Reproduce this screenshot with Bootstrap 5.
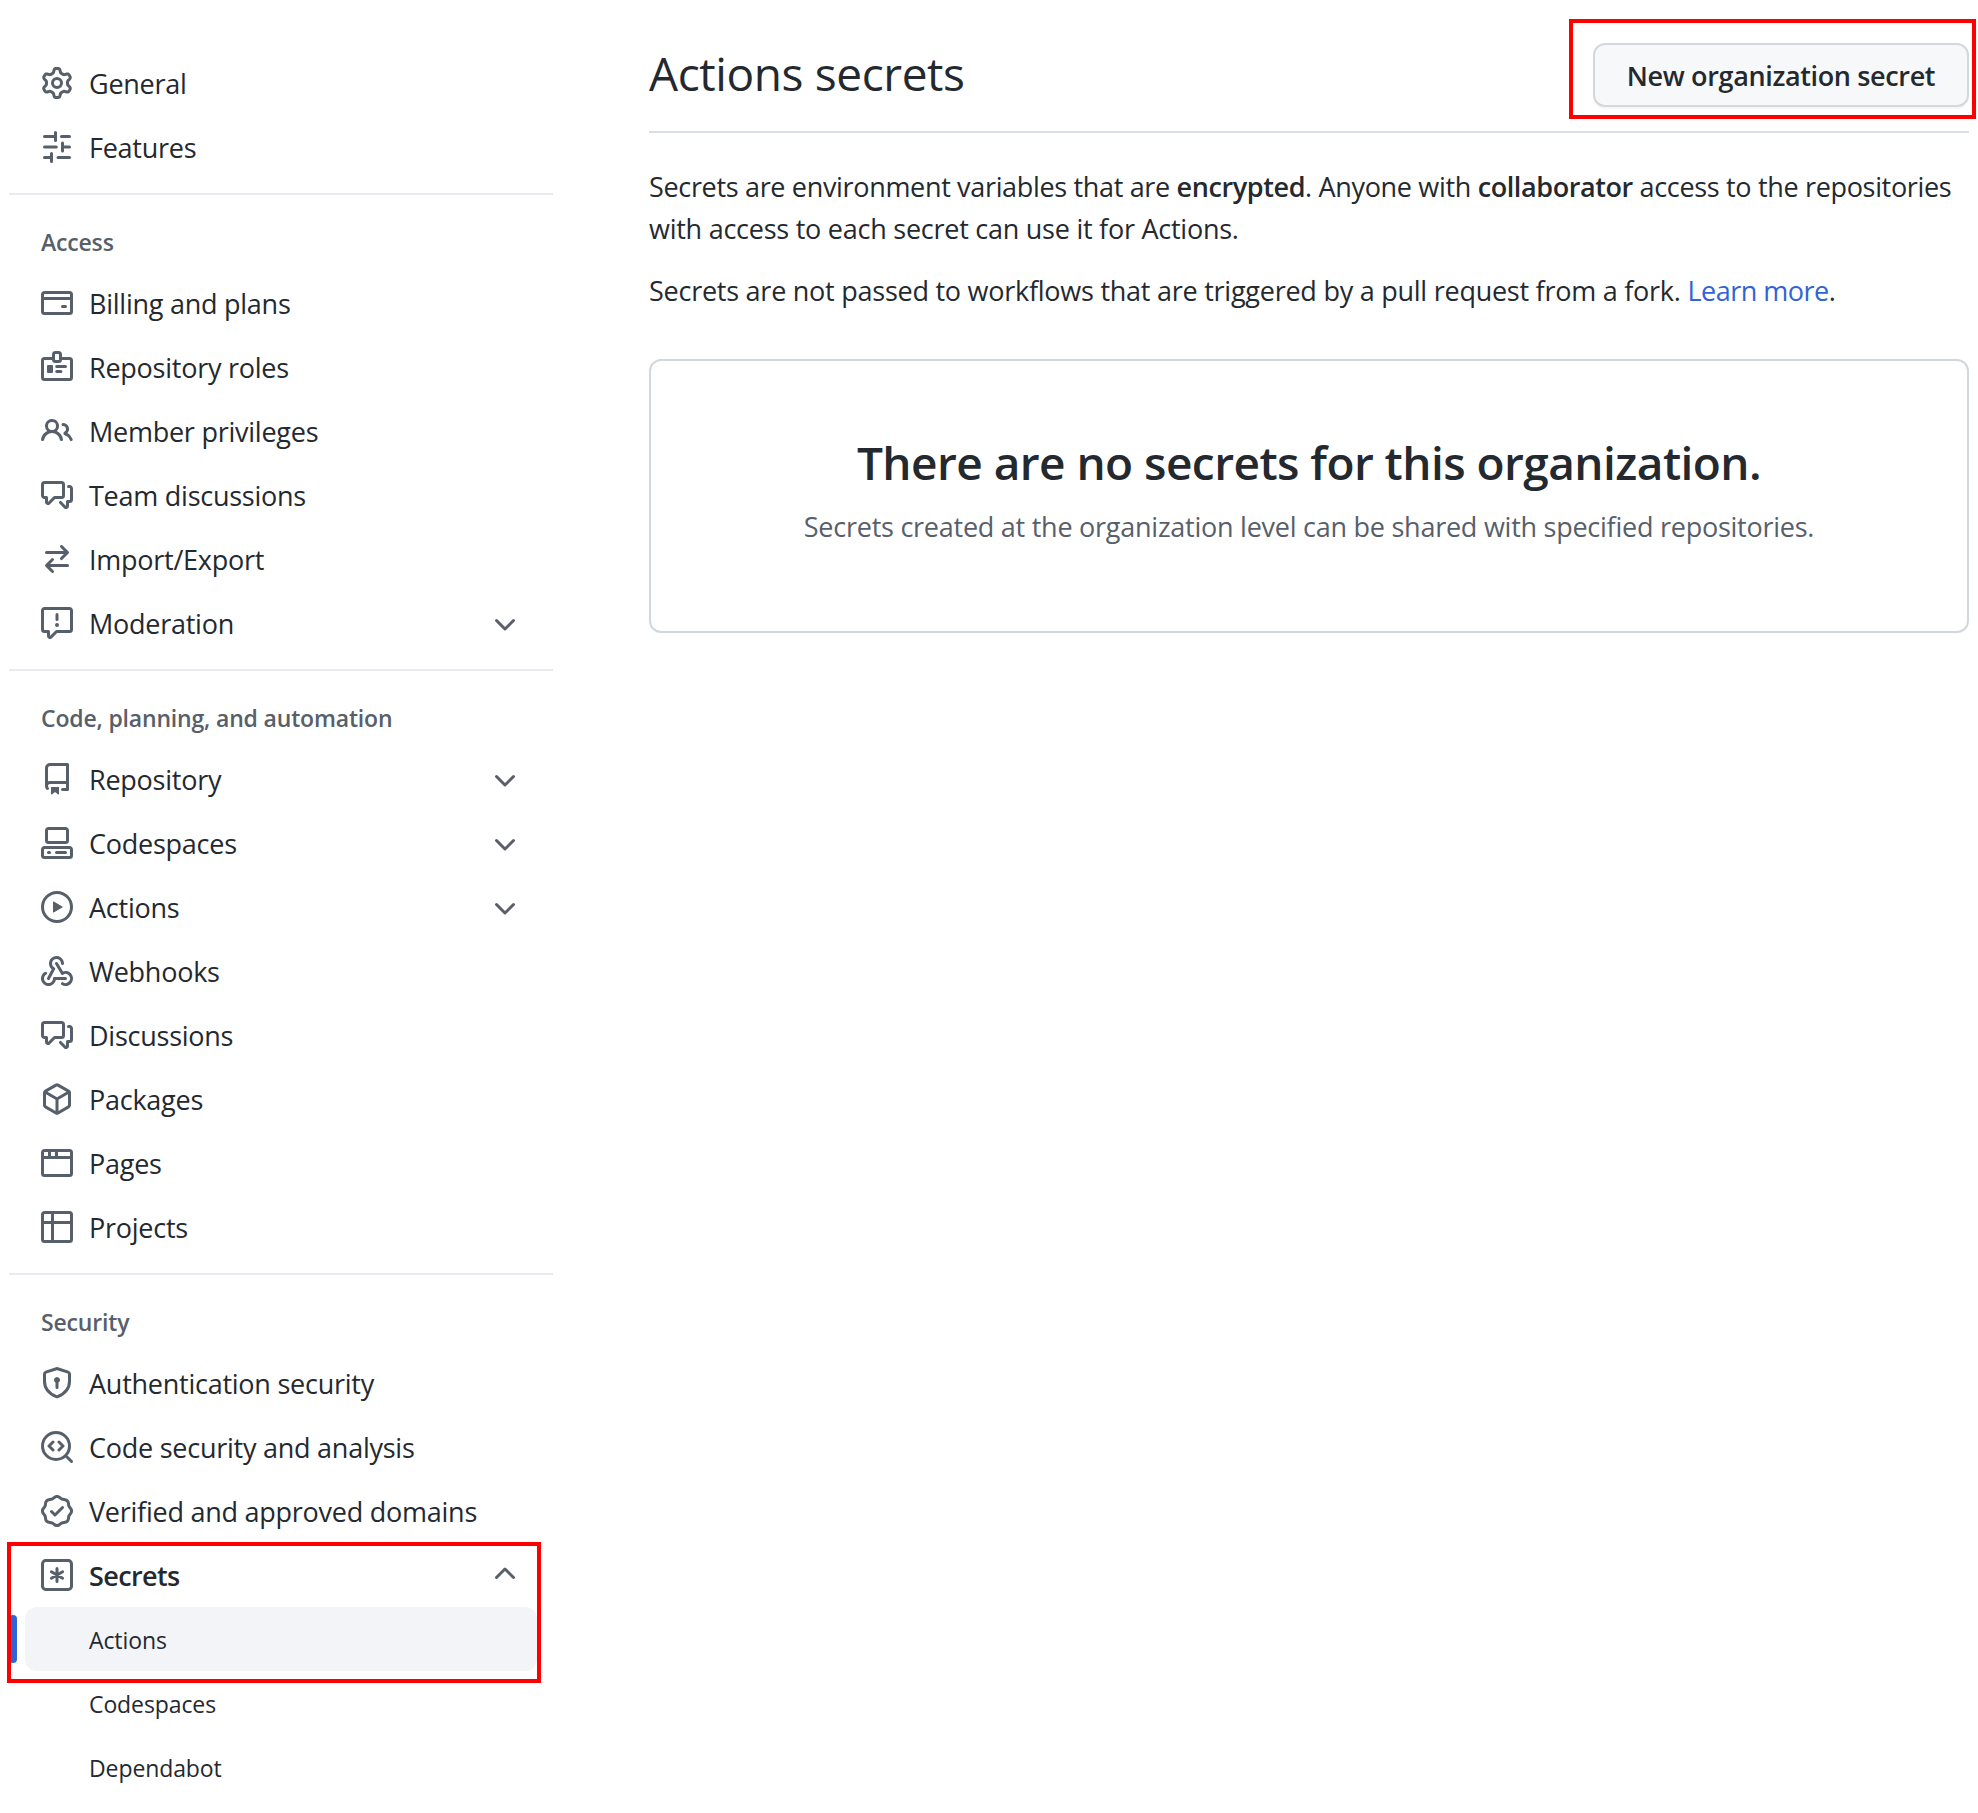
<!DOCTYPE html>
<html lang="en">
<head>
<meta charset="utf-8">
<meta name="viewport" content="width=device-width, initial-scale=1">
<title>Actions secrets</title>
<link href="https://cdn.jsdelivr.net/npm/bootstrap@5.3.0/dist/css/bootstrap.min.css" rel="stylesheet">
<style>
  body { font-family: "Open Sans", "Noto Sans", sans-serif; font-size: 27px; line-height: 42px; letter-spacing: -.25px; color: #24292f; background: #fff; }
  strong { font-weight: 600; letter-spacing: -.4px; }
  .semi { font-weight: 600; letter-spacing: -.6px; }
  .page { padding: 0 9px; column-gap: 96px; }
  .sidebar { width: 544px; padding-top: 51px; }
  .side-item { height: 64px; margin: 0 16px; padding: 0 16px; gap: 16px; color: #24292f; text-decoration: none; border-radius: 12px; }
  .side-item span { padding-top: 2px; }
  .side-item svg { width: 32px; height: 32px; flex: none; color: #57606a; fill: currentColor; }
  .side-item svg .ln { fill: none; stroke: currentColor; stroke-width: 1.5; stroke-linecap: round; stroke-linejoin: round; }
  .side-sub { font-size: 23px; letter-spacing: -.1px; padding-left: 64px; }
  .side-active { background: #f3f4f7; }
  .side-active::before { content: ""; position: absolute; left: -16px; top: 8px; width: 8px; height: 48px; border-radius: 4px; background: #2f65d6; }
  .side-rule { height: 2px; margin-top: 14px; background: #e8ecf0; }
  .side-title { margin: 0; padding: 29px 32px 11px; font-size: 23px; line-height: 36px; font-weight: 600; letter-spacing: -.17px; color: #57606a; }
  .outline-red { position: absolute; border: 4px solid #f00; pointer-events: none; }
  .outline-nav { left: -2px; top: -1px; width: 534px; height: 141px; }
  .outline-btn { left: -24px; top: -24px; right: -7px; bottom: -12px; }
  .main-head { padding: 43px 0 24px; border-bottom: 2px solid #d8dee4; margin-bottom: 33px; }
  .main-head h1 { font-size: 46px; line-height: 60px; font-weight: 400; letter-spacing: -.4px; }
  .btn-secret { height: 64px; width: 376px; padding: 2px 0 0; font-size: 27px; line-height: 58px; font-weight: 600; letter-spacing: -.36px; color: #24292f; background: #f6f8fa; border: 2px solid #d5d8da; border-radius: 12px; box-shadow: 0 2px 0 rgba(27,31,36,.04); }
  .intro { margin-bottom: 20px; }
  .intro-first::first-line { letter-spacing: -.33px; }
  .intro a { color: #3163d6; text-decoration: none; letter-spacing: -.5px; }
  .blank-box { margin-top: 47px; height: 274px; padding-top: 65px; border: 2px solid #d0d7de; border-radius: 12px; }
  .blank-box h2 { font-size: 46px; line-height: 72px; font-weight: 600; letter-spacing: -.55px; margin-bottom: 8px; }
  .blank-box p { color: #57606a; }
</style>
</head>
<body>
<svg class="d-none">
  <symbol id="chev" viewBox="0 0 16 16"><path d="M12.78 6.22a.75.75 0 010 1.06l-4.25 4.25a.75.75 0 01-1.06 0L3.22 7.28a.75.75 0 011.06-1.06L8 9.94l3.72-3.72a.75.75 0 011.06 0z"/></symbol>
  <symbol id="chev-up" viewBox="0 0 16 16"><path d="M3.22 9.78a.75.75 0 010-1.06l4.25-4.25a.75.75 0 011.06 0l4.25 4.25a.75.75 0 01-1.06 1.06L8 6.06 4.28 9.78a.75.75 0 01-1.06 0z"/></symbol>
  <symbol id="talk" viewBox="0 0 16 16"><path d="M1.5 2.75a.25.25 0 01.25-.25h8.5a.25.25 0 01.25.25v5.5a.25.25 0 01-.25.25h-3.5a.75.75 0 00-.53.22L3.5 11.44V9.25a.75.75 0 00-.75-.75h-1a.25.25 0 01-.25-.25v-5.5zM1.75 1A1.75 1.75 0 000 2.75v5.5C0 9.216.784 10 1.75 10H2v1.543a1.457 1.457 0 002.487 1.03L7.061 10h3.189A1.75 1.75 0 0012 8.25v-5.5A1.75 1.75 0 0010.25 1h-8.5zM14.5 4.75a.25.25 0 00-.25-.25h-.5a.75.75 0 110-1.5h.5c.966 0 1.75.784 1.75 1.75v5.5A1.75 1.75 0 0114.25 12H14v1.543a1.457 1.457 0 01-2.487 1.03L9.22 12.28a.75.75 0 111.06-1.06l2.22 2.22v-2.19a.75.75 0 01.75-.75h1a.25.25 0 00.25-.25v-5.5z"/></symbol>
</svg>
<div class="page d-flex align-items-start">
  <nav class="sidebar flex-shrink-0">
    <a class="side-item d-flex align-items-center"><svg viewBox="0 0 16 16"><path fill-rule="evenodd" d="M7.429 1.525a6.593 6.593 0 011.142 0c.036.003.108.036.137.146l.289 1.105c.147.56.55.967.997 1.189.174.086.341.183.501.29.417.278.97.423 1.53.27l1.102-.303c.11-.03.175.016.195.046.219.31.41.641.573.989.014.031.022.11-.059.19l-.815.806c-.411.406-.562.957-.53 1.456a4.588 4.588 0 010 .582c-.032.499.119 1.05.53 1.456l.815.806c.08.08.073.159.059.19a6.494 6.494 0 01-.573.99c-.02.029-.086.074-.195.045l-1.103-.303c-.559-.153-1.112-.008-1.529.27-.16.107-.327.204-.5.29-.449.222-.851.628-.998 1.189l-.289 1.105c-.029.11-.101.143-.137.146a6.613 6.613 0 01-1.142 0c-.036-.003-.108-.037-.137-.146l-.289-1.105c-.147-.56-.55-.967-.997-1.189a4.502 4.502 0 01-.501-.29c-.417-.278-.97-.423-1.53-.27l-1.102.303c-.11.03-.175-.016-.195-.046a6.492 6.492 0 01-.573-.989c-.014-.031-.022-.11.059-.19l.815-.806c.411-.406.562-.957.53-1.456a4.587 4.587 0 010-.582c.032-.499-.119-1.05-.53-1.456l-.815-.806c-.08-.08-.073-.159-.059-.19a6.44 6.44 0 01.573-.99c.02-.029.086-.075.195-.045l1.103.303c.559.153 1.112.008 1.529-.27.16-.107.327-.204.5-.29.449-.222.851-.628.998-1.189l.289-1.105c.029-.11.101-.143.137-.146zM8 0c-.236 0-.47.01-.701.03-.743.065-1.29.615-1.458 1.261l-.29 1.106c-.017.066-.078.158-.211.224a5.994 5.994 0 00-.668.386c-.123.082-.233.09-.3.071L3.27 2.776c-.644-.177-1.392.02-1.82.63a7.977 7.977 0 00-.704 1.217c-.315.675-.111 1.422.363 1.891l.815.806c.05.048.098.147.088.294a6.084 6.084 0 000 .772c.01.147-.038.246-.088.294l-.815.806c-.474.469-.678 1.216-.363 1.891.2.428.436.835.704 1.218.428.609 1.176.806 1.82.63l1.103-.303c.066-.019.176-.011.299.071.213.143.436.272.668.386.133.066.194.158.212.224l.289 1.106c.169.646.715 1.196 1.458 1.26a8.094 8.094 0 001.402 0c.743-.064 1.29-.614 1.458-1.26l.29-1.106c.017-.066.078-.158.211-.224a5.98 5.98 0 00.668-.386c.123-.082.233-.09.3-.071l1.102.302c.644.177 1.392-.02 1.82-.63.268-.382.505-.789.704-1.217.315-.675.111-1.422-.364-1.891l-.814-.806c-.05-.048-.098-.147-.088-.294a6.1 6.1 0 000-.772c-.01-.147.039-.246.088-.294l.814-.806c.475-.469.679-1.216.364-1.891a7.992 7.992 0 00-.704-1.218c-.428-.609-1.176-.806-1.82-.63l-1.103.303c-.066.019-.176.011-.299-.071a5.991 5.991 0 00-.668-.386c-.133-.066-.194-.158-.212-.224L10.16 1.29C9.99.645 9.444.095 8.701.031A8.094 8.094 0 008 0zm1.5 8a1.5 1.5 0 11-3 0 1.5 1.5 0 013 0zM11 8a3 3 0 11-6 0 3 3 0 016 0z"/></svg><span>General</span></a>
    <a class="side-item d-flex align-items-center"><svg viewBox="0 0 16 16"><path class="ln" d="M1.75 2.75H7.25M7.25.75v4M10.25 2.75h4M1.75 8h5.9M10.75 6v4M10.75 8h3.5M1.75 13.25h3.5M5.25 11.25v4M8.5 13.25h5.75"/></svg><span>Features</span></a>

    <div class="side-rule"></div>
    <h3 class="side-title">Access</h3>
    <a class="side-item d-flex align-items-center"><svg viewBox="0 0 16 16"><path class="ln" d="M1.75 2.75h12.5a1 1 0 011 1v8.5a1 1 0 01-1 1H1.75a1 1 0 01-1-1v-8.5a1 1 0 011-1zM.75 5.75h14.5M10.75 9.75h1.5"/></svg><span>Billing and plans</span></a>
    <a class="side-item d-flex align-items-center"><svg viewBox="0 0 16 16"><path class="ln" d="M6.25 3.75h-4.5a1 1 0 00-1 1v8.5a1 1 0 001 1h12.5a1 1 0 001-1v-8.5a1 1 0 00-1-1h-4.5"/><rect class="ln" x="6.25" y=".75" width="3.5" height="4.5" rx="1"/><rect x="3" y="7" width="3" height="4" rx=".5"/><path class="ln" d="M7.85 7.8h4.4M7.85 10.2h2.1"/></svg><span>Repository roles</span></a>
    <a class="side-item d-flex align-items-center"><svg viewBox="0 0 16 16"><path fill-rule="evenodd" d="M5.5 3.5a2 2 0 100 4 2 2 0 000-4zM2 5.5a3.5 3.5 0 115.898 2.549 5.507 5.507 0 013.034 4.084.75.75 0 11-1.482.235 4.001 4.001 0 00-7.9 0 .75.75 0 01-1.482-.236A5.507 5.507 0 013.102 8.05 3.49 3.49 0 012 5.5zM11 4a.75.75 0 100 1.5 1.5 1.5 0 01.666 2.844.75.75 0 00-.416.672v.352a.75.75 0 00.574.73c1.2.289 2.162 1.2 2.522 2.372a.75.75 0 101.434-.44 5.01 5.01 0 00-2.56-3.012A3 3 0 0011 4z"/></svg><span>Member privileges</span></a>
    <a class="side-item d-flex align-items-center"><svg><use href="#talk"/></svg><span>Team discussions</span></a>
    <a class="side-item d-flex align-items-center"><svg viewBox="0 0 16 16"><path d="M5.22 14.78a.75.75 0 001.06-1.06L4.56 12h8.69a.75.75 0 000-1.5H4.56l1.72-1.72a.75.75 0 00-1.06-1.06l-3 3a.75.75 0 000 1.06l3 3zm5.56-6.5a.75.75 0 11-1.06-1.06l1.72-1.72H2.75a.75.75 0 010-1.5h8.69L9.72 2.28a.75.75 0 011.06-1.06l3 3a.75.75 0 010 1.06l-3 3z"/></svg><span>Import/Export</span></a>
    <a class="side-item d-flex align-items-center"><svg viewBox="0 0 16 16"><path fill-rule="evenodd" d="M1.75 1.5a.25.25 0 00-.25.25v9.5c0 .138.112.25.25.25h2a.75.75 0 01.75.75v2.19l2.72-2.72a.75.75 0 01.53-.22h6.5a.25.25 0 00.25-.25v-9.5a.25.25 0 00-.25-.25H1.75zM0 1.75C0 .784.784 0 1.75 0h12.5C15.216 0 16 .784 16 1.75v9.5A1.75 1.75 0 0114.25 13H8.06l-2.573 2.573A1.457 1.457 0 013 14.543V13H1.75A1.75 1.75 0 010 11.25v-9.5zM9 9a1 1 0 11-2 0 1 1 0 012 0zm-.25-5.25a.75.75 0 00-1.5 0v2.5a.75.75 0 001.5 0v-2.5z"/></svg><span class="flex-grow-1">Moderation</span><svg><use href="#chev"/></svg></a>

    <div class="side-rule"></div>
    <h3 class="side-title">Code, planning, and automation</h3>
    <a class="side-item d-flex align-items-center"><svg viewBox="0 0 16 16"><path fill-rule="evenodd" d="M2 2.5A2.5 2.5 0 014.5 0h8.75a.75.75 0 01.75.75v12.5a.75.75 0 01-.75.75h-2.5a.75.75 0 110-1.5h1.75v-2h-8a1 1 0 00-.714 1.7.75.75 0 01-1.072 1.05A2.495 2.495 0 012 11.5v-9zm10.5-1V9h-8c-.356 0-.694.074-1 .208V2.5a1 1 0 011-1h8zM5 12.25v3.25a.25.25 0 00.4.2l1.45-1.087a.25.25 0 01.3 0L8.6 15.7a.25.25 0 00.4-.2v-3.25a.25.25 0 00-.25-.25h-3.5a.25.25 0 00-.25.25z"/></svg><span class="flex-grow-1">Repository</span><svg><use href="#chev"/></svg></a>
    <a class="side-item d-flex align-items-center"><svg viewBox="0 0 16 16"><path fill-rule="evenodd" d="M2 1.75C2 .784 2.784 0 3.75 0h8.5C13.216 0 14 .784 14 1.75v5a1.75 1.75 0 01-1.75 1.75h-8.5A1.75 1.75 0 012 6.75v-5zm1.75-.25a.25.25 0 00-.25.25v5c0 .138.112.25.25.25h8.5a.25.25 0 00.25-.25v-5a.25.25 0 00-.25-.25h-8.5zM0 11.25c0-.966.784-1.75 1.75-1.75h12.5c.966 0 1.75.784 1.75 1.75v3A1.75 1.75 0 0114.25 16H1.75A1.75 1.75 0 010 14.25v-3zM1.75 11a.25.25 0 00-.25.25v3c0 .138.112.25.25.25h12.5a.25.25 0 00.25-.25v-3a.25.25 0 00-.25-.25H1.75zM3 12.75a.75.75 0 01.75-.75h.5a.75.75 0 010 1.5h-.5a.75.75 0 01-.75-.75zm4 0a.75.75 0 01.75-.75h4.5a.75.75 0 010 1.5h-4.5a.75.75 0 01-.75-.75z"/></svg><span class="flex-grow-1">Codespaces</span><svg><use href="#chev"/></svg></a>
    <a class="side-item d-flex align-items-center"><svg viewBox="0 0 16 16"><circle class="ln" cx="8" cy="8" r="7.25"/><path d="M6.379 5.227A.25.25 0 006 5.442v5.117a.25.25 0 00.379.214l4.264-2.559a.25.25 0 000-.428L6.379 5.227z"/></svg><span class="flex-grow-1">Actions</span><svg><use href="#chev"/></svg></a>
    <a class="side-item d-flex align-items-center"><svg viewBox="0 0 16 16"><path d="M5.5 4.25a2.25 2.25 0 014.5 0 .75.75 0 001.5 0 3.75 3.75 0 10-6.14 2.889l-2.272 4.258a.75.75 0 001.324.706L7 7.25a.75.75 0 00-.309-1.015A2.25 2.25 0 015.5 4.25z"/><path d="M7.364 3.607a.75.75 0 011.03.257l2.608 4.349a3.75 3.75 0 11-.628 6.785.75.75 0 01.752-1.299 2.25 2.25 0 10-.033-3.88.75.75 0 01-1.03-.256L7.107 4.636a.75.75 0 01.257-1.03z"/><path d="M2.9 8.776A.75.75 0 012.625 9.8 2.25 2.25 0 106 11.75a.75.75 0 01.75-.751h5.5a.75.75 0 010 1.5H7.425a3.751 3.751 0 11-5.55-3.998.75.75 0 011.024.274z"/></svg><span>Webhooks</span></a>
    <a class="side-item d-flex align-items-center"><svg><use href="#talk"/></svg><span>Discussions</span></a>
    <a class="side-item d-flex align-items-center"><svg viewBox="0 0 16 16"><path fill-rule="evenodd" d="M8.878.392a1.75 1.75 0 00-1.756 0l-5.25 3.045A1.75 1.75 0 001 4.951v6.098c0 .624.332 1.2.872 1.514l5.25 3.045a1.75 1.75 0 001.756 0l5.25-3.045c.54-.313.872-.89.872-1.514V4.951c0-.624-.332-1.2-.872-1.514L8.878.392zM7.875 1.69a.25.25 0 01.25 0l4.63 2.685L8 7.133 3.245 4.375l4.63-2.685zM2.5 5.677v5.372c0 .09.047.171.125.216l4.625 2.683V8.432L2.5 5.677zm6.25 8.271l4.625-2.683a.25.25 0 00.125-.216V5.677L8.75 8.432v5.516z"/></svg><span>Packages</span></a>
    <a class="side-item d-flex align-items-center"><svg viewBox="0 0 16 16"><path class="ln" d="M1.75 1.75h12.5a1 1 0 011 1v10.5a1 1 0 01-1 1H1.75a1 1 0 01-1-1V2.75a1 1 0 011-1zM.75 5.25h14.5M4.25 1.75v3.5M7.75 1.75v3.5"/></svg><span>Pages</span></a>
    <a class="side-item d-flex align-items-center"><svg viewBox="0 0 16 16"><path class="ln" d="M1.75.75h12.5a1 1 0 011 1v12.5a1 1 0 01-1 1H1.75a1 1 0 01-1-1V1.75a1 1 0 011-1zM.75 5.75h14.5M5.75.75v14.5"/></svg><span>Projects</span></a>

    <div class="side-rule"></div>
    <h3 class="side-title">Security</h3>
    <a class="side-item d-flex align-items-center"><svg viewBox="0 0 16 16"><path class="ln" d="M7.7.85a1 1 0 01.6 0l5.25 1.68a1 1 0 01.7.95V7c0 2.9-1.2 5.9-5.96 7.85a.9.9 0 01-.58 0C2.95 12.9 1.75 9.9 1.75 7V3.48a1 1 0 01.7-.95z"/><path d="M9.5 6.5a1.5 1.5 0 01-.75 1.3v2.45a.75.75 0 01-1.5 0V7.8A1.5 1.5 0 119.5 6.5z"/></svg><span>Authentication security</span></a>
    <a class="side-item d-flex align-items-center"><svg viewBox="0 0 16 16"><path class="ln" d="M14.25 7.5a6.75 6.75 0 11-13.5 0 6.75 6.75 0 0113.5 0zM12.4 12.4l2.85 2.85M6 5.5L4 7.5l2 2M9 5.5l2 2-2 2"/></svg><span>Code security and analysis</span></a>
    <a class="side-item d-flex align-items-center"><svg viewBox="0 0 16 16"><path fill-rule="evenodd" d="M9.585.52a2.678 2.678 0 00-3.17 0l-.928.68a1.178 1.178 0 01-.518.215L3.83 1.59a2.678 2.678 0 00-2.24 2.24l-.175 1.14a1.178 1.178 0 01-.215.518l-.68.928a2.678 2.678 0 000 3.17l.68.928c.113.153.186.33.215.518l.175 1.138a2.678 2.678 0 002.24 2.24l1.138.175c.187.029.365.102.518.215l.928.68a2.678 2.678 0 003.17 0l.928-.68a1.17 1.17 0 01.518-.215l1.138-.175a2.678 2.678 0 002.241-2.241l.175-1.138c.029-.187.102-.365.215-.518l.68-.928a2.678 2.678 0 000-3.17l-.68-.928a1.179 1.179 0 01-.215-.518L14.41 3.83a2.678 2.678 0 00-2.24-2.24l-1.138-.175a1.179 1.179 0 01-.518-.215L9.585.52zM7.303 1.728c.415-.305.98-.305 1.394 0l.928.68c.348.256.752.423 1.18.489l1.136.174c.51.078.909.478.987.987l.174 1.137c.066.427.233.831.489 1.18l.68.927c.305.415.305.98 0 1.394l-.68.928a2.678 2.678 0 00-.489 1.18l-.174 1.136a1.178 1.178 0 01-.987.987l-1.137.174a2.678 2.678 0 00-1.18.489l-.927.68c-.415.305-.98.305-1.394 0l-.928-.68a2.678 2.678 0 00-1.18-.489l-1.136-.174a1.178 1.178 0 01-.987-.987l-.174-1.137a2.678 2.678 0 00-.489-1.18l-.68-.927a1.178 1.178 0 010-1.394l.68-.928c.256-.348.423-.752.489-1.18l.174-1.136c.078-.51.478-.909.987-.987l1.137-.174a2.678 2.678 0 001.18-.489l.927-.68zM11.28 6.78a.75.75 0 00-1.06-1.06L7 8.94 5.78 7.72a.75.75 0 00-1.06 1.06l1.75 1.75a.75.75 0 001.06 0l3.75-3.75z"/></svg><span>Verified and approved domains</span></a>
    <div class="position-relative">
      <a class="side-item d-flex align-items-center"><svg viewBox="0 0 16 16"><rect class="ln" x=".75" y=".75" width="14.5" height="14.5" rx="1.6"/><path class="ln" d="M8 4.75v6.5M5.2 6.4l5.6 3.2M10.8 6.4L5.2 9.6"/></svg><span class="semi flex-grow-1">Secrets</span><svg><use href="#chev-up"/></svg></a>
      <a class="side-item side-sub side-active d-flex align-items-center position-relative"><span>Actions</span></a>
      <div class="outline-red outline-nav"></div>
    </div>
    <a class="side-item side-sub d-flex align-items-center"><span>Codespaces</span></a>
    <a class="side-item side-sub d-flex align-items-center"><span>Dependabot</span></a>
  </nav>

  <main class="flex-grow-1">
    <header class="main-head d-flex justify-content-between align-items-start">
      <h1 class="m-0">Actions secrets</h1>
      <div class="position-relative">
        <button type="button" class="btn btn-secret d-block">New organization secret</button>
        <div class="outline-red outline-btn"></div>
      </div>
    </header>
    <p class="intro intro-first">Secrets are environment variables that are <strong>encrypted</strong>. Anyone with <strong>collaborator</strong> access to the repositories<br>with access to each secret can use it for Actions.</p>
    <p class="intro">Secrets are not passed to workflows that are triggered by a pull request from a fork. <a href="#">Learn more</a>.</p>
    <section class="blank-box text-center">
      <h2>There are no secrets for this organization.</h2>
      <p class="m-0">Secrets created at the organization level can be shared with specified repositories.</p>
    </section>
  </main>
</div>
<script src="https://cdn.jsdelivr.net/npm/bootstrap@5.3.0/dist/js/bootstrap.bundle.min.js"></script>
</body>
</html>
